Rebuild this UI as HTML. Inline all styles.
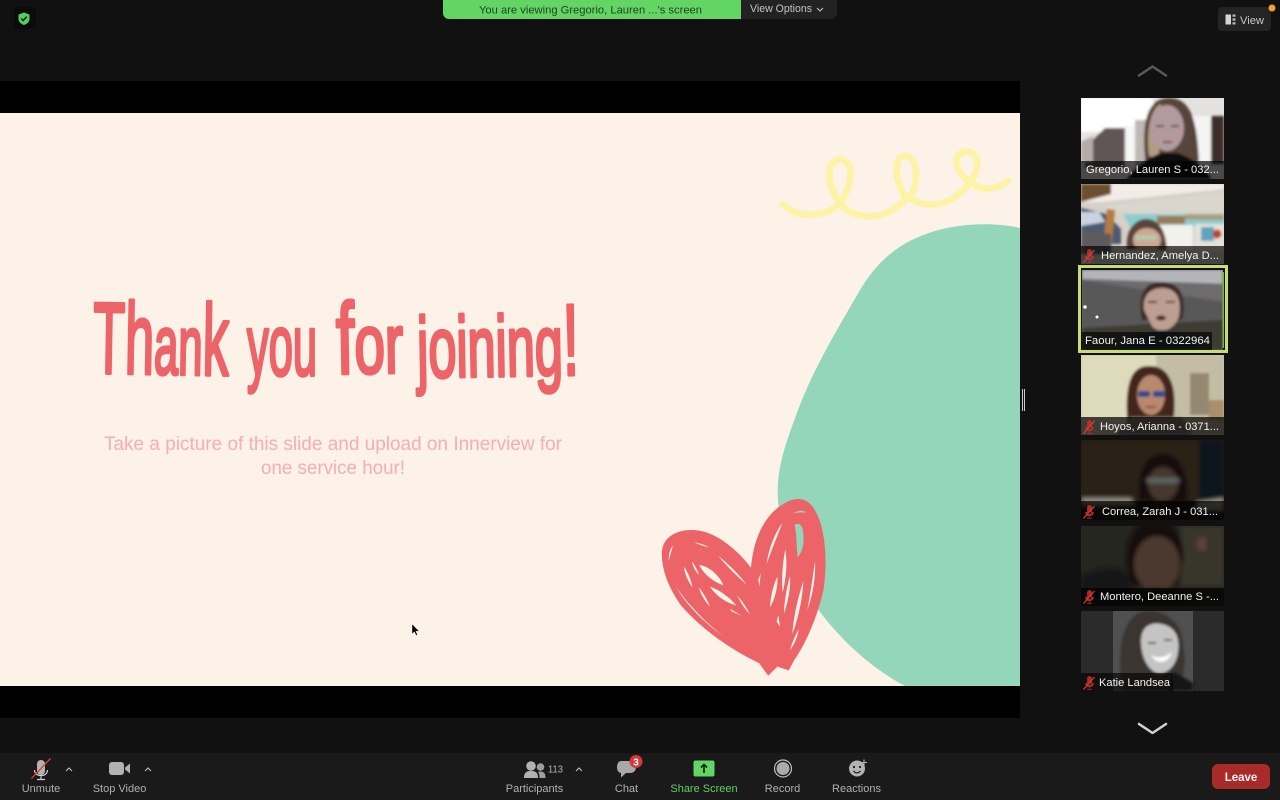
<!DOCTYPE html>
<html><head><meta charset="utf-8"><title>Zoom</title>
<style>
html,body{margin:0;padding:0;background:#111;width:1280px;height:800px;overflow:hidden}
svg{display:block}
text{font-family:"Liberation Sans",sans-serif}
.tb{font-size:11px;fill:#b0b0b0;text-anchor:middle}
.lb{font-size:11px;fill:#f2f2f2}
</style></head><body>
<svg width="1280" height="800" viewBox="0 0 1280 800" xmlns="http://www.w3.org/2000/svg">
<defs>
<filter id="b1"><feGaussianBlur stdDeviation="1.3"/></filter>
<filter id="b2"><feGaussianBlur stdDeviation="2.2"/></filter>
<g id="mm"><path d="M4.500 1.500a2 2 0 0 1 4 0v5a2 2 0 0 1-4 0zM2.500 6c0 5 8 5 8 0M6.500 10v2M4 12.500h5" fill="#c9302c" stroke="#c9302c" stroke-width=".8" opacity=".85"/><path d="M0.500 12.500L11.500 0" stroke="#e23a33" stroke-width="1.200"/></g>
</defs>
<rect width="1280" height="800" fill="#111"/>

<!-- shared video -->
<rect x="0" y="81" width="1020" height="637" fill="#000"/>
<rect x="0" y="113" width="1020" height="573" fill="#fcf2e8"/>
<path d="M1020 228C1000 223 965 222 935 231C905 240 880 256 860 290C840 325 815 365 798 410C785 445 776 470 778 500C781 540 795 575 820 612C845 645 875 670 905 686L1020 686Z" fill="#93d6b9"/>
<path d="M38 193C90 240 170 230 210 190C165 130 170 58 210 58C252 58 250 135 210 190C250 240 340 250 410 175C365 110 375 47 405 47C447 50 445 130 420 175C465 205 545 205 600 125C545 90 550 35 590 35C632 35 630 90 600 125C630 155 680 150 715 122" transform="translate(770 140) scale(.3333)" fill="none" stroke="#fdf3a6" stroke-width="20" stroke-linecap="round"/>

<!-- heart -->
<g transform="translate(640 480) scale(.3333)">
<path d="M68 215C72 170 115 150 165 153C230 158 295 215 335 270C340 190 370 110 430 75C465 52 495 55 515 80C552 130 562 230 548 330C530 410 495 490 460 540L445 568L408 556L385 582L360 548C280 510 190 450 125 375C90 325 66 270 68 215Z" fill="#ec6468" stroke="#ec6468" stroke-width="5"/>
<g fill="#fcf2e8">
<path d="M178 255C205 258 238 285 250 316C222 306 192 285 178 255Z"/>
<path d="M210 320C240 330 272 355 288 376C256 368 226 345 210 320Z"/>
<path d="M132 260C145 278 153 302 158 322C146 308 134 284 132 260Z"/>
<path d="M177 322C190 340 203 360 210 380C197 366 182 345 177 322Z"/>
<path d="M107 318C140 370 200 430 252 470C200 434 138 376 107 318Z"/>
<path d="M99 197L86 243C86 222 90 206 99 197Z"/>
<path d="M156 244C166 258 173 272 177 285C167 275 158 260 156 244Z"/>
<path d="M162 186C180 190 195 195 208 202C192 199 176 194 162 186Z"/>
<path d="M235 228C270 256 298 285 320 314C292 290 258 256 235 228Z"/>
<path d="M292 347C306 362 320 384 330 403C316 390 302 368 292 347Z"/>
<path d="M270 386L306 408L276 395Z"/>
<path d="M436 208C443 250 438 296 428 338C424 295 428 248 436 208Z"/>
<path d="M412 290C415 320 403 362 390 382C391 350 401 312 412 290Z"/>
<path d="M450 288C453 320 444 368 432 400C432 365 441 320 450 288Z"/>
<path d="M490 303C488 355 474 418 457 462C461 405 475 350 490 303Z"/>
<path d="M428 128C414 162 396 208 380 252C386 206 405 158 428 128Z"/>
<path d="M525 243C528 290 518 348 502 390C510 345 519 290 525 243Z"/>
<path d="M476 448C472 475 460 498 450 510C456 490 465 466 476 448Z"/>
<path d="M362 280L358 320L355 300Z"/>
<path d="M415 405L420 440L410 425Z"/>
</g>
<path d="M464 135C484 122 494 150 490 190C488 210 480 225 473 232C469 200 471 165 464 135Z" fill="#93d6b9"/>
<path d="M460 100C475 90 490 90 500 98C485 96 472 98 460 100Z" fill="#93d6b9"/>
<path d="M362 548L385 580L408 558" fill="none" stroke="#ec6468" stroke-width="9"/>
</g>

<!-- slide text -->
<g fill="#ec6468" stroke="#ec6468" stroke-width="3.600" stroke-linejoin="round" style="font-size:101px">
<text x="93" y="374" textLength="136" lengthAdjust="spacingAndGlyphs" transform="rotate(1 160 340)">Th<tspan style="font-size:84px">an</tspan>k</text>
<text x="247" y="375" textLength="70" lengthAdjust="spacingAndGlyphs" style="font-size:86px">you</text>
<text x="336" y="373" textLength="67" lengthAdjust="spacingAndGlyphs" transform="rotate(-1 370 340)">f<tspan style="font-size:84px">or</tspan></text>
<text x="417" y="376" textLength="162" lengthAdjust="spacingAndGlyphs" transform="rotate(-1 500 340)"><tspan style="font-size:86px">joining</tspan>!</text>
</g>
<text x="104" y="450" textLength="458" lengthAdjust="spacingAndGlyphs" style="font-size:19.500px" fill="#f6aeb2">Take a picture of this slide and upload on Innerview for</text>
<text x="261" y="474" textLength="144" lengthAdjust="spacingAndGlyphs" style="font-size:19.500px" fill="#f6aeb2">one service hour!</text>
<path d="M412 624v10l2.400-2.200 1.700 3.700 1.400-.6-1.600-3.600h3.200z" fill="#000" stroke="#fff" stroke-width=".4"/>

<!-- top bar -->
<rect x="14" y="7" width="22" height="22" rx="4" fill="#0b0b0b"/>
<path d="M24 12.500l5.500 2v4c0 3.500-2.500 5.500-5.500 6.500c-3-1-5.500-3-5.500-6.500v-4z" fill="#58cc60"/>
<path d="M21.200 18.500l2 2 3.600-3.800" fill="none" stroke="#0e2a10" stroke-width="1.500"/>
<path d="M443 0H741V19H449a6 6 0 0 1-6-6Z" fill="#63d565"/>
<path d="M741 0H837V13a6 6 0 0 1-6 6H741Z" fill="#222"/>
<text x="479" y="13.500" textLength="223" lengthAdjust="spacingAndGlyphs" style="font-size:11px" fill="#1f3f22">You are viewing Gregorio, Lauren ...'s screen</text>
<text x="750" y="12" textLength="62" lengthAdjust="spacingAndGlyphs" style="font-size:11px" fill="#c4c4c4">View Options</text>
<path d="M817 8l3 3 3-3" fill="none" stroke="#c4c4c4" stroke-width="1.100"/>
<rect x="1218" y="7" width="53" height="24" rx="4" fill="#242424"/>
<path d="M1225.500 14.500h5.500v10h-5.500z" fill="#d6d6d6"/>
<path d="M1232.500 14.500h3v2.200h-3zM1232.500 18.400h3v2.200h-3zM1232.500 22.300h3v2.200h-3z" fill="#b8b8b8"/>
<text x="1240" y="24" textLength="24" lengthAdjust="spacingAndGlyphs" style="font-size:11px" fill="#c8c8c8">View</text>
<circle cx="1272" cy="8" r="3.500" fill="#f5a030"/>

<!-- scroll arrows -->
<path d="M1139 75.500L1152.500 66.500L1166 75.500" fill="none" stroke="#5a5a5a" stroke-width="2.500" stroke-linecap="round" stroke-linejoin="round"/>
<path d="M1139 724L1152.500 733L1166 724" fill="none" stroke="#d2d2d2" stroke-width="2.500" stroke-linecap="round" stroke-linejoin="round"/>
<rect x="1022" y="389" width="1" height="22" fill="#ccc"/><rect x="1024" y="389" width="1" height="22" fill="#ccc"/>

<!-- thumbnail 1 -->
<svg x="1081" y="98" width="143" height="81" viewBox="0 0 143 81">
<rect width="143" height="81" fill="#e4e2e0"/>
<g filter="url(#b1)">
<rect width="72" height="34" fill="#fff"/>
<path d="M4 50L24 30H44V70H4Z" fill="#5f5754"/>
<path d="M0 44L12 38V64H0Z" fill="#b5acaa"/>
<rect x="44" y="28" width="10" height="50" fill="#f6f6f6"/>
<rect x="54" y="22" width="14" height="50" fill="#bdb9b6"/>
<rect x="112" y="18" width="18" height="46" fill="#f4f4f4"/>
<path d="M130 18H143V66H130Z" fill="#3d2f29"/>
<path d="M64 60C60 16 70 0 88 0C110 0 116 22 118 64H64Z" fill="#57453a"/>
<path d="M68 58C64 28 72 8 80 6L78 60Z" fill="#b39c80"/>
<ellipse cx="86" cy="30" rx="17" ry="23" fill="#b39a9e"/>
<path d="M75 28h8M90 28h8" stroke="#4b4858" stroke-width="1.800"/>
<path d="M82 44h9" stroke="#86404e" stroke-width="2"/>
<path d="M45 81C55 66 72 58 80 55L96 55C112 60 124 70 130 81Z" fill="#0e0e10"/>
</g>
<rect y="63" width="143" height="18" fill="#000" opacity=".68"/>
</svg>
<text class="lb" x="1086" y="173" textLength="133" lengthAdjust="spacingAndGlyphs">Gregorio, Lauren S - 032...</text>

<!-- thumbnail 2 -->
<svg x="1081" y="184" width="143" height="80" viewBox="0 0 143 80">
<rect width="143" height="80" fill="#d5d0c8"/>
<g filter="url(#b1)">
<path d="M0 0H143V5L20 18H0Z" fill="#f2ece8"/>
<path d="M0 0H30V10L0 18Z" fill="#6d4f2f"/>
<path d="M20 22L143 8V30H44Z" fill="#d8d6cd"/>
<path d="M42 30H143V44H50Z" fill="#8ccdd0"/>
<rect x="76" y="32" width="28" height="8" fill="#9c7a54"/>
<rect x="104" y="30" width="39" height="6" fill="#a8a080"/>
<rect x="78" y="41" width="34" height="25" fill="#f2f1ec"/>
<rect x="114" y="40" width="29" height="27" fill="#e6e2d8"/>
<rect x="120" y="43" width="13" height="14" fill="#5fa4bf"/>
<circle cx="136" cy="50" r="4.500" fill="#b8433a"/>
<path d="M0 24L25 30L40 45V60H0Z" fill="#4e5a72"/>
<path d="M0 28L18 28L24 38L0 42Z" fill="#c8d2e0"/>
<path d="M26 25L34 26L30 66L22 64Z" fill="#b57b3c"/>
<path d="M0 46L30 50V70H0Z" fill="#5b5b5e"/>
<path d="M46 65C44 45 55 35 65 35C80 35 85 50 86 66Z" fill="#5a4538"/>
<ellipse cx="66" cy="56" rx="14" ry="12" fill="#caa792"/>
<rect x="54" y="51" width="22" height="5" fill="#b9c9a8"/>
</g>
<rect y="62" width="143" height="18" fill="#000" opacity=".68"/>
</svg>
<use href="#mm" x="1083" y="250"/>
<text class="lb" x="1101" y="259" textLength="118" lengthAdjust="spacingAndGlyphs">Hernandez, Amelya D...</text>

<!-- thumbnail 3 active -->
<rect x="1079.500" y="266.500" width="147" height="85" fill="none" stroke="#c5dd72" stroke-width="3"/>
<svg x="1082" y="270" width="141" height="80" viewBox="0 0 141 80">
<rect width="141" height="80" fill="#6d6b6c"/>
<g filter="url(#b1)">
<path d="M0 0H141V14L0 9Z" fill="#b4b5b9"/>
<path d="M0 10L141 32V80H0Z" fill="#595859"/>
<path d="M0 58L141 50V80H0Z" fill="#3e3a32"/>
<path d="M60 50C54 18 68 12 80 12C96 12 106 26 100 50Z" fill="#3c2c25"/>
<path d="M62 40C60 24 70 18 80 18C94 18 100 28 97 46C92 62 76 64 70 56Z" fill="#bd9e92"/>
<path d="M66 32h9M84 32h9" stroke="#3d302b" stroke-width="1.800"/>
<ellipse cx="79" cy="48" rx="5" ry="2.500" fill="#4a2a2a"/>
<path d="M35 80C45 66 68 60 80 60C100 60 112 68 118 80Z" fill="#2a3034"/>
</g>
<circle cx="3" cy="37" r="1.800" fill="#fff"/><circle cx="15" cy="47" r="1.500" fill="#fff"/>
<rect x="0" y="62" width="130" height="18" fill="#000" opacity=".65"/>
</svg>
<rect x="1222.500" y="272" width="1.500" height="76" fill="#7fb23e"/>
<text class="lb" x="1085" y="344" textLength="125" lengthAdjust="spacingAndGlyphs">Faour, Jana E - 0322964</text>

<!-- thumbnail 4 -->
<svg x="1081" y="355" width="143" height="80" viewBox="0 0 143 80">
<rect width="143" height="80" fill="#c8c3a6"/>
<g filter="url(#b1)">
<rect width="75" height="80" fill="#dedbbd"/>
<rect x="75" width="68" height="80" fill="#c4bda5"/>
<path d="M109 18H128V60H109Z" fill="#958871"/>
<path d="M128 45H143V65H128Z" fill="#a98f6a"/>
<path d="M46 62C44 25 52 10 69 11C88 11 96 30 93 60L90 70H46Z" fill="#43251a"/>
<ellipse cx="70" cy="40" rx="14" ry="20" fill="#b9896d"/>
<rect x="57" y="36" width="12" height="6" rx="2" fill="#2e4d8e"/><rect x="72" y="36" width="12" height="6" rx="2" fill="#2e4d8e"/>
<path d="M64 52h11" stroke="#6d3d36" stroke-width="1.500"/>
<path d="M35 80L50 62L100 62L112 80Z" fill="#8f8175"/>
</g>
<rect y="62" width="143" height="18" fill="#000" opacity=".72"/>
</svg>
<use href="#mm" x="1083" y="421"/>
<text class="lb" x="1100" y="430" textLength="119" lengthAdjust="spacingAndGlyphs">Hoyos, Arianna - 0371...</text>

<!-- thumbnail 5 -->
<svg x="1081" y="440" width="143" height="80" viewBox="0 0 143 80">
<rect width="143" height="80" fill="#211a12"/>
<g filter="url(#b2)">
<rect width="118" height="60" fill="#2b2214"/>
<rect x="118" width="25" height="80" fill="#11131b"/>
<path d="M58 60C56 25 68 14 82 14C98 14 108 30 106 62Z" fill="#14100e"/>
<ellipse cx="82" cy="44" rx="15" ry="17" fill="#46392f"/>
<rect x="66" y="38" width="32" height="5" fill="#5f6665"/>
<path d="M0 58H50L55 66H0Z" fill="#8f8b80"/>
<path d="M115 62L143 58V70H115Z" fill="#9a978d"/>
</g>
<rect y="61" width="143" height="19" fill="#000" opacity=".72"/>
</svg>
<use href="#mm" x="1083" y="506"/>
<text class="lb" x="1102" y="515" textLength="116" lengthAdjust="spacingAndGlyphs">Correa, Zarah J - 031...</text>

<!-- thumbnail 6 -->
<svg x="1081" y="526" width="143" height="80" viewBox="0 0 143 80">
<rect width="143" height="80" fill="#25261f"/>
<g filter="url(#b2)">
<rect x="100" width="43" height="60" fill="#37362c"/>
<path d="M0 50C20 40 40 40 50 50V80H0Z" fill="#161614"/>
<path d="M46 40C44 12 54 -6 74 -6C94 -6 104 12 102 35L95 60H52Z" fill="#15110d"/>
<ellipse cx="76" cy="38" rx="23" ry="28" fill="#4c382d"/>
<rect x="116" y="12" width="9" height="12" fill="#5d423a"/>
<path d="M40 80C45 68 60 62 75 62C100 62 110 72 112 80Z" fill="#1d1a18"/>
</g>
<rect y="62" width="143" height="18" fill="#000" opacity=".72"/>
</svg>
<use href="#mm" x="1083" y="591"/>
<text class="lb" x="1100" y="600" textLength="119" lengthAdjust="spacingAndGlyphs">Montero, Deeanne S -...</text>

<!-- thumbnail 7 -->
<svg x="1081" y="611" width="143" height="80" viewBox="0 0 143 80">
<rect width="143" height="80" fill="#2b2b2b"/>
<rect x="32" width="80" height="80" fill="#505050"/>
<g filter="url(#b1)">
<path d="M41 80C36 40 40 0 68 0C84 0 98 10 101 26L104 50L100 80Z" fill="#3a3632"/>
<path d="M60 30C60 14 72 10 84 14C96 18 100 30 96 46C92 60 80 66 72 60C64 54 60 42 60 30Z" fill="#c4c4c4"/>
<path d="M70 44C78 49 86 45 91 41C88 52 76 55 70 44Z" fill="#fff"/>
<path d="M67 32h8M83 29h8" stroke="#4c4c4c" stroke-width="1.800"/>
<path d="M92 60L112 72V80H88Z" fill="#191919"/>
</g>
<rect y="62" width="92" height="18" fill="#000" opacity=".62"/>
</svg>
<use href="#mm" x="1083" y="677"/>
<text class="lb" x="1099" y="686" textLength="71" lengthAdjust="spacingAndGlyphs">Katie Landsea</text>

<!-- toolbar -->
<rect x="0" y="753" width="1280" height="47" fill="#1a1a1a"/>
<!-- mic -->
<path d="M37 764a4 4 0 0 1 8 0v7a4 4 0 0 1-8 0z" fill="#b2b2b2"/>
<path d="M34.500 770c0 7.500 13 7.500 13 0M41 776.500v3M37 779.500h8" fill="none" stroke="#d0d0d0" stroke-width="1.200"/>
<path d="M31.500 778.500L50.500 758.500" stroke="#d8403a" stroke-width="1.300"/>
<path d="M66 771l3-3 3 3" fill="none" stroke="#b4b4b4" stroke-width="1.200"/>
<text class="tb" x="41" y="792">Unmute</text>
<!-- video -->
<rect x="109" y="762" width="15" height="13" rx="3" fill="#b2b2b2"/>
<path d="M125 767.500l5-4v10l-5-4z" fill="#b2b2b2"/>
<path d="M145 771l3-3 3 3" fill="none" stroke="#b4b4b4" stroke-width="1.200"/>
<text class="tb" x="119.500" y="792">Stop Video</text>
<!-- participants -->
<circle cx="531" cy="766" r="4.800" fill="#b2b2b2"/>
<path d="M524 778c0-6 3-7 7-7s7 1 7 7z" fill="#b2b2b2"/>
<circle cx="540.500" cy="767" r="3.800" fill="#9e9e9e"/>
<path d="M539.500 771.500c4 0 6 1 6 6.500h-6c0-3-.5-5-1.500-6z" fill="#9e9e9e"/>
<text x="548" y="772.500" textLength="15" lengthAdjust="spacingAndGlyphs" style="font-size:10.500px" fill="#b4b4b4">113</text>
<path d="M576 771l3-3 3 3" fill="none" stroke="#b4b4b4" stroke-width="1.200"/>
<text class="tb" x="534.500" y="792">Participants</text>
<!-- chat -->
<path d="M621 761h9c4 0 6 2.500 6 6s-2 6-6 6h-4l-5 4.500v-4.500c-3-.5-4-3-4-6s1.500-6 4-6z" fill="#a8a8a8"/>
<circle cx="636" cy="761.500" r="6.500" fill="#d5383a"/>
<text x="636" y="765.500" text-anchor="middle" font-weight="700" style="font-size:10px" fill="#fff">3</text>
<text class="tb" x="626.500" y="792">Chat</text>
<!-- share -->
<rect x="693.500" y="760.500" width="21" height="16" rx="2" fill="#63d565"/>
<path d="M704 773v-8M701 767.500l3-3 3 3" fill="none" stroke="#0d2a0f" stroke-width="1.700"/>
<text class="tb" x="704" y="792" style="fill:#62d063">Share Screen</text>
<!-- record -->
<circle cx="783" cy="768.500" r="8.500" fill="none" stroke="#c0c0c0" stroke-width="1.200"/>
<circle cx="783" cy="768.500" r="6.500" fill="#ababab"/>
<text class="tb" x="782.500" y="792">Record</text>
<!-- reactions -->
<circle cx="857" cy="768.500" r="8" fill="#b2b2b2"/>
<circle cx="854" cy="767" r="1.100" fill="#1a1a1a"/><circle cx="860" cy="767" r="1.100" fill="#1a1a1a"/>
<path d="M853.500 771c2 2.500 5 2.500 7 0" fill="none" stroke="#1a1a1a" stroke-width="1.100"/>
<path d="M864 759.500v6M861 762.500h6" stroke="#b2b2b2" stroke-width="1.100"/>
<text class="tb" x="856.500" y="792">Reactions</text>
<!-- leave -->
<rect x="1212" y="764" width="58" height="25" rx="6" fill="#a92b29"/>
<text x="1241" y="781" text-anchor="middle" font-weight="700" style="font-size:11.500px" fill="#f5f5f5">Leave</text>
</svg>
</body></html>
